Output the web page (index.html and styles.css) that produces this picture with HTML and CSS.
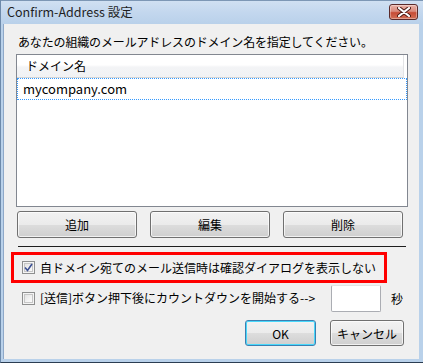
FILE: index.html
```html
<!DOCTYPE html>
<html lang="ja">
<head>
    <meta charset="UTF-8">
    <title>Confirm-Address 設定</title>
    <link rel="stylesheet" href="styles.css">
</head>
<body>
    <div class="window">
        <div class="titlebar">
            <span class="title">Confirm-Address 設定</span>
            <button class="close-btn" aria-label="閉じる">
                <svg width="14" height="10" viewBox="0 0 14 10">
                    <path d="M2 1 L12 9 M12 1 L2 9" stroke="#4a1a14" stroke-width="4" stroke-linecap="round"/>
                    <path d="M2 1 L12 9 M12 1 L2 9" stroke="#ffffff" stroke-width="2.2" stroke-linecap="round"/>
                </svg>
            </button>
        </div>
        <div class="client">
            <p class="intro">あなたの組織のメールアドレスのドメイン名を指定してください。</p>

            <div class="listview">
                <div class="list-header">ドメイン名</div>
                <div class="list-item">mycompany.com</div>
            </div>

            <div class="list-buttons">
                <button class="btn">追加</button>
                <button class="btn">編集</button>
                <button class="btn">削除</button>
            </div>

            <hr class="separator">

            <div class="highlight">
                <label class="check-row">
                    <span class="checkbox checked">
                        <svg width="9" height="9" viewBox="0 0 9 9">
                            <path d="M1 4.5 L3.5 7.5 L8 1" fill="none" stroke="#3d5193" stroke-width="1.6"/>
                        </svg>
                    </span>
                    自ドメイン宛てのメール送信時は確認ダイアログを表示しない
                </label>
            </div>

            <div class="countdown-row">
                <label class="check-row">
                    <span class="checkbox"></span>
                    [送信]ボタン押下後にカウントダウンを開始する-->
                </label>
                <input class="seconds" type="text">
                <span class="unit">秒</span>
            </div>

            <div class="dialog-buttons">
                <button class="btn btn-ok">OK</button>
                <button class="btn btn-cancel">キャンセル</button>
            </div>
        </div>
    </div>
</body>
</html>
```

FILE: styles.css
```css
:root {
    --frame: #b9d1ea;
    --client-bg: #f0f0f0;
    --text: #000000;
    --focus: #3399ff;
}

* {
    margin: 0;
    padding: 0;
    box-sizing: border-box;
}

body {
    font-family: "Noto Sans CJK JP", "Noto Sans", sans-serif;
    font-size: 12px;
    color: var(--text);
    background: var(--frame);
}

.window {
    width: 423px;
    height: 363px;
    display: flex;
    flex-direction: column;
    background: var(--frame);
    border-left: 1px solid #6d8aab;
    border-bottom: 1px solid #2b3d52;
}

.titlebar {
    height: 24px;
    display: flex;
    align-items: center;
    justify-content: space-between;
    padding: 0 5px 0 6px;
    background: linear-gradient(to bottom, #d0e0f2 0%, #c3d7ee 50%, #b9d1ea 100%);
    border-top: 1px solid #7d97b5;
}

.title {
    font-size: 12.5px;
    color: #1e1e1e;
    margin-top: -2px;
}

.close-btn {
    width: 29px;
    height: 16px;
    margin-top: -2px;
    display: flex;
    align-items: center;
    justify-content: center;
    border: 1px solid #5a2a2a;
    border-radius: 3px;
    background: linear-gradient(to bottom, #e9b2a8 0%, #d98a7c 45%, #c74c36 55%, #d26e55 100%);
    box-shadow: inset 0 0 0 1px rgba(255, 255, 255, 0.35);
}

.client {
    flex: 1;
    margin: 0 4px 3px 2px;
    background: var(--client-bg);
    border-left: 1px solid #8ea8c8;
    padding: 10px 0 0 0;
    display: flex;
    flex-direction: column;
}

.intro {
    padding-left: 14px;
    line-height: 16px;
    height: 20px;
    letter-spacing: -0.15px;
}

.listview {
    margin-left: 12px;
    width: 392px;
    height: 153px;
    background: #ffffff;
    border: 1px solid #828790;
}

.list-header {
    height: 23px;
    line-height: 22px;
    padding-left: 9px;
    background: linear-gradient(to bottom, #ffffff 0%, #ffffff 45%, #f3f4f6 55%, #f1f2f4 100%);
    border-bottom: 1px solid #d5d5d5;
    border-right: 1px solid #e3e4e6;
    margin-right: 3px;
}

.list-item {
    height: 22px;
    line-height: 20px;
    padding-left: 5px;
    border: 1px dotted var(--focus);
    font-size: 13px;
}

.list-buttons {
    display: flex;
    gap: 13px;
    margin: 4px 0 0 13px;
}

.btn {
    font-family: inherit;
    font-size: 12px;
    color: var(--text);
    height: 27px;
    border: 1px solid #707070;
    border-radius: 3px;
    background: linear-gradient(to bottom, #f2f2f2 0%, #ebebeb 50%, #dddddd 51%, #cfcfcf 100%);
    box-shadow: inset 0 0 0 1px rgba(255, 255, 255, 0.7);
}

.list-buttons .btn {
    width: 120px;
}

.separator {
    border: none;
    border-top: 1px solid #1e1e1e;
    margin: 8px 0 0 14px;
    width: 388px;
}

.highlight {
    margin: 5px 0 0 7px;
    width: 376px;
    height: 31px;
    border: 3px solid #ff0000;
    display: flex;
    align-items: center;
    padding-left: 8px;
}

.check-row {
    display: flex;
    align-items: center;
    gap: 5px;
    line-height: 16px;
    white-space: nowrap;
}

.checkbox {
    width: 13px;
    height: 13px;
    border: 1px solid #8e8f8f;
    background: linear-gradient(135deg, #dcdcdc 0%, #f4f4f4 60%, #ffffff 100%);
    box-shadow: inset 0 0 0 1px #f4f4f4, inset 0 0 0 2px #c6c6c6;
    display: flex;
    align-items: center;
    justify-content: center;
}

.countdown-row {
    display: flex;
    align-items: center;
    margin: 2px 0 0 18px;
    height: 26px;
}

.seconds {
    width: 50px;
    height: 27px;
    margin-left: 16px;
    border: 1px solid #abadb3;
    border-top-color: #e3e3e3;
    border-radius: 2px;
    background: #ffffff;
    font-family: inherit;
}

.unit {
    margin-left: 10px;
}

.dialog-buttons {
    display: flex;
    justify-content: flex-end;
    gap: 14px;
    margin: 9px 15px 0 0;
}

.btn-ok {
    width: 71px;
    height: 26px;
    border-color: #3c7fb1;
    box-shadow: inset 0 0 0 1px #48d8fb;
}

.btn-cancel {
    width: 74px;
    height: 26px;
}
```
